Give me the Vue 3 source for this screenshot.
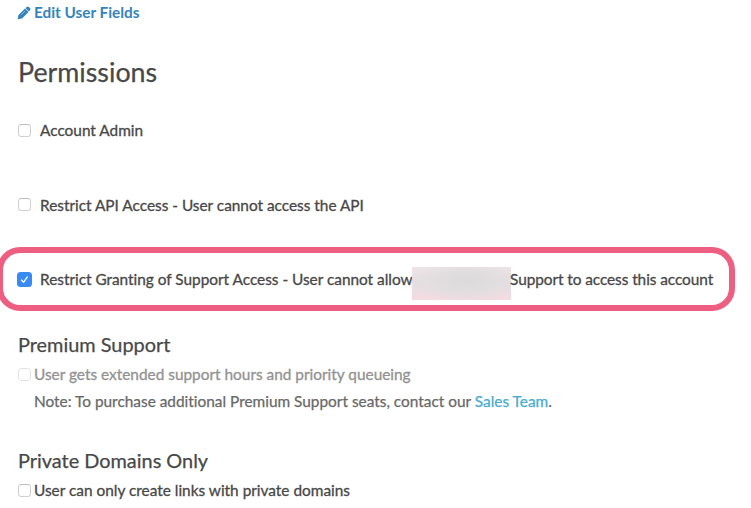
<script setup>
const permissions = [
  { id: 'admin', label: 'Account Admin' },
  { id: 'api', label: 'Restrict API Access - User cannot access the API' },
]
</script>

<template>
  <main class="page">
    <a class="edit">
      <svg class="pencil" viewBox="0 0 14 14" aria-hidden="true">
        <path d="M.6 13.3 L1.5 9 L8 2.5 L11.5 6 L5 12.5 Z M8.4 2.1 L9.8 .9 Q10.9 0 11.9 .9 L13 2 Q14 3 13.1 4.1 L11.9 5.6 Z" fill="#3384bd" />
        <path d="M4.2 8.8 L8 5" stroke="#b9d6e9" stroke-width=".6" />
      </svg>
      <span class="edit-text">Edit User Fields</span>
    </a>
    <h1 class="title"><span>Permissions</span></h1>

    <label v-for="item in permissions" :key="item.id" class="option">
      <span class="box"></span>
      <span :class="['text', item.id]">{{ item.label }}</span>
    </label>

    <label class="option highlight">
      <span class="box checked">
        <svg viewBox="0 0 14 14" aria-hidden="true"><path d="M4.2 7.5 L6.1 9.6 L9.7 4.5" fill="none" stroke="#fff" stroke-width="1.2" stroke-linecap="round" stroke-linejoin="round" /></svg>
      </span>
      <span class="text grant">Restrict Granting of Support Access - User cannot allow</span>
      <span class="redacted"></span>
      <span class="text support">Support to access this account</span>
    </label>

    <section class="group premium">
      <h2 class="heading"><span class="h-premium">Premium Support</span></h2>
      <label class="sub disabled"><span class="box"></span><span class="text hours">User gets extended support hours and priority queueing</span></label>
      <p class="note"><span class="note-text">Note: To purchase additional Premium Support seats, contact our <a class="sales">Sales Team</a>.</span></p>
    </section>

    <section class="group private">
      <h2 class="heading"><span class="h-private">Private Domains Only</span></h2>
      <label class="sub"><span class="box"></span><span class="text domains">User can only create links with private domains</span></label>
    </section>
  </main>
</template>

<style>
body { background: #fff; }
</style>

<style scoped>
.page { width: 751px; height: 508px; box-sizing: border-box; overflow: hidden; background: #fff; color: #484848; font-family: Lato, sans-serif; font-size: 15.4px; font-variant-ligatures: none; }
.page * { box-sizing: border-box; }
.edit { display: flex; align-items: center; height: 24px; padding-left: 17px; color: #3384bd; font-weight: 700; font-size: 15.3px; line-height: 18px; }
.pencil { width: 14px; height: 14px; margin: 2px 3px 0 0; }
.title { display: flex; align-items: center; margin: 0; height: 69px; padding: 27px 0 0 18px; font-size: 26.8px; font-weight: 400; line-height: 1; -webkit-text-stroke: .25px currentColor; }
.option { display: flex; align-items: center; height: 74.5px; padding-left: 18px; white-space: nowrap; line-height: 20px; }
.box { flex: none; width: 13px; height: 13px; border: 1px solid #d0d0d0; border-top-color: #bdbdbd; border-radius: 3.5px; background: #fff; }
.option .text { margin-left: 9px; letter-spacing: -.01px; -webkit-text-stroke: .3px currentColor; }
.highlight { width: 738px; height: 64px; margin: 5px 0 0 -3px; padding-left: 14px; border: 6px solid #ee5e80; border-radius: 23px; }
.box.checked { display: flex; width: 15px; height: 15px; border: 0; background: #398bf4; }
.checked svg { width: 15px; height: 15px; }
.option .grant { margin-left: 8px; width: 372px; letter-spacing: -.015px; }
.redacted { flex: none; width: 99px; height: 33px; margin-top: 9px; background: radial-gradient(ellipse at 55% 42%, #dcdadb 0%, #e2dee0 40%, transparent 75%), linear-gradient(#efe4e8, #e4dfe1 45%, #f4dbe2); }
.option .support { margin-left: -1px; letter-spacing: -.07px; }
.heading { display: flex; align-items: center; height: 30px; margin: 0; padding-left: 18px; font-size: 19.9px; font-weight: 400; line-height: 24px; -webkit-text-stroke: .25px currentColor; }
.premium { padding-top: 18px; }
.private { padding-top: 31px; }
.sub { display: flex; align-items: center; height: 28px; padding: 2px 0 0 18px; line-height: 20px; white-space: nowrap; }
.sub .text { margin-left: 3px; -webkit-text-stroke: .3px currentColor; }
.disabled { color: #929292; }
.disabled .box { border-color: #e1e1e1; }
.note { display: flex; align-items: center; height: 27px; margin: 0; padding-left: 34px; color: #696969; white-space: nowrap; -webkit-text-stroke: .25px currentColor; }
.sales { color: #46acd1; }
</style>
